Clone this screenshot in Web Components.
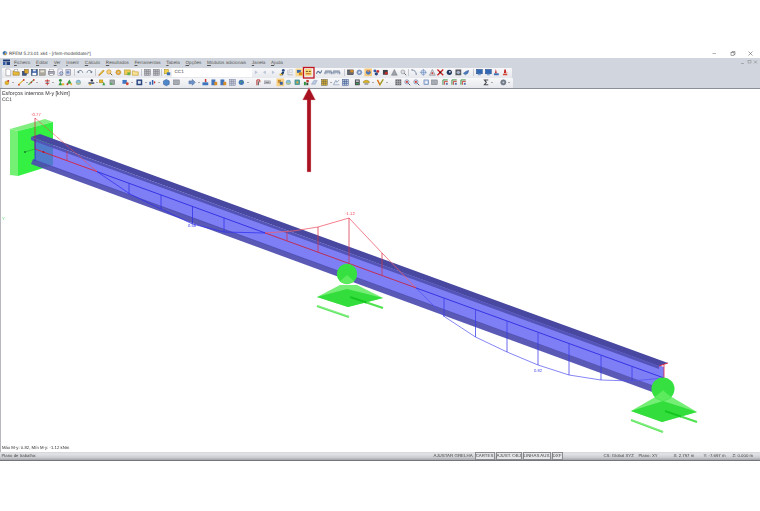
<!DOCTYPE html>
<html lang="pt">
<head>
<meta charset="utf-8">
<title>RFEM</title>
<style>
  html, body { margin: 0; background: #fff; }
</style>
</head>
<body>
<rfem-app>
  <rfem-titlebar>RFEM 5.23.01 x64 - [rfem-modelldatei*]</rfem-titlebar>
  <rfem-menubar>
    <rfem-menu><u>F</u>icheiro</rfem-menu>
    <rfem-menu><u>E</u>ditar</rfem-menu>
    <rfem-menu><u>V</u>er</rfem-menu>
    <rfem-menu><u>I</u>nserir</rfem-menu>
    <rfem-menu><u>C</u>álculo</rfem-menu>
    <rfem-menu><u>R</u>esultados</rfem-menu>
    <rfem-menu><u>F</u>erramentas</rfem-menu>
    <rfem-menu><u>T</u>abela</rfem-menu>
    <rfem-menu><u>O</u>pções</rfem-menu>
    <rfem-menu><u>M</u>ódulos adicionais</rfem-menu>
    <rfem-menu><u>J</u>anela</rfem-menu>
    <rfem-menu><u>A</u>juda</rfem-menu>
  </rfem-menubar>
  <rfem-toolbar width="510" pad="1.65" items="doc open blue save grey print prev prev2 | undo redo | pencil find ring note folder | table table | note2 combo fwd0 back0 fwd0 person faint sel1 boxed +2.3 squig bridge bridge +2.5 | box gear sel2 dots dark pyr lens | curve cross tri xred dblue dgray bshape +1 | screen screen rblue flag"></rfem-toolbar>
  <rfem-toolbar width="511" pad=".7" items="y1 v +1.65 dash v +-2.3 cdash v +3.7 rcross v +1.7 g1 +-.7 g2 +.3 lb +4.3 pers v +-.3 yg +1.3 gg +4.3 br v +1.7 dsq v +.7 graph v +1.7 cube +1.3 gray +7.3 barrow v +.7 rb +.3 bo +.3 bo +.3 gridg +.3 glob v +4.7 rbr +.3 gtext +4.3 sel3 +-.7 lb +.3 teal +.3 gr +-.7 lb2 +1.3 yg2 v +-.3 bg +.3 gridb +3.3 dy +.3 yg3 v +1.7 rain v +5.7 dgrid +.3 mag +.3 mag +1.3 blue2 +-.7 gray +2.3 fr +.3 fr +.3 fr +14.3 sig v +4.7 cog v"></rfem-toolbar>
  <rfem-viewport></rfem-viewport>
  <rfem-statusbar>
    <span slot="left">Plano de trabalho:</span>
    <rfem-toggle slot="toggles" w="20">AJUSTAR</rfem-toggle>
    <rfem-toggle slot="toggles" w="20">GRELHA</rfem-toggle>
    <rfem-toggle slot="toggles" w="20" on>CARTES</rfem-toggle>
    <rfem-toggle slot="toggles" w="26" on>AJUST. OBJ</rfem-toggle>
    <rfem-toggle slot="toggles" w="28" on>LINHAS AUX.</rfem-toggle>
    <rfem-toggle slot="toggles" w="11" on>DXF</rfem-toggle>
    <rfem-readout slot="right" w="35">CS: Global XYZ</rfem-readout>
    <rfem-readout slot="right" w="35">Plano: XY</rfem-readout>
    <rfem-readout slot="right" w="30">X: 2.797 m</rfem-readout>
    <rfem-readout slot="right" w="29">Y: -7.697 m</rfem-readout>
    <rfem-readout slot="right">Z: 0.000 m</rfem-readout>
  </rfem-statusbar>
  <rfem-callout></rfem-callout>
</rfem-app>

<script>
const r = (x, y, w, h, f, s) => `<rect x="${x}" y="${y}" width="${w}" height="${h}" fill="${f}"${s ? ` stroke="${s}"` : ''}/>`;
const c = (x, y, rad, f, s) => `<circle cx="${x}" cy="${y}" r="${rad}" fill="${f}"${s ? ` stroke="${s}"` : ''}/>`;
const p = (d, f, s, w) => `<path d="${d}" fill="${f || 'none'}"${s ? ` stroke="${s}" stroke-width="${w || 1.5}"` : ''}/>`;

// toolbar glyphs, 16x16
const ICONS = {
  doc: p('M3 1h7l3 3v11H3z', '#fff', '#777', 1),
  open: p('M1 5h5l1 2h7v7H1z', '#e8b93a', '#8a6a1a', 1) + r(4, 2, 7, 4, '#fff', '#999'),
  blue: r(2, 6, 8, 8, '#33558f', '#223') + r(6, 2, 8, 8, '#d9a52c', '#654'),
  save: r(2, 2, 12, 12, '#3b62a8', '#234') + r(5, 2, 6, 4, '#dfe6f2') + r(4, 9, 8, 5, '#fff'),
  grey: r(2, 2, 12, 12, '#a9a59a', '#777') + r(4, 4, 8, 4, '#e5e2d8'),
  print: r(4, 2, 8, 4, '#fff', '#888') + r(2, 6, 12, 6, '#aab', '#667') + r(4, 11, 8, 3, '#fff', '#888'),
  prev: r(3, 1, 9, 13, '#eef', '#889') + c(10, 10, 3.5, '#bcd', '#447'),
  prev2: r(3, 2, 10, 12, '#ccd', '#778') + c(7, 8, 3, '#6f8fc8'),
  undo: p('M3 8a5 5 0 0 1 9-2l1 3', 'none', '#7d8a9c', 2) + p('M1 6l3 4 3-3z', '#5a6b85'),
  redo: p('M13 8a5 5 0 0 0-9-2l-1 3', 'none', '#7d8a9c', 2) + p('M15 6l-3 4-3-3z', '#5a6b85'),
  pencil: p('M3 13L12 3l2 2L5 14z', '#e9c020', '#a5761a', 1) + p('M2 15l1-3 2 2z', '#c62828'),
  find: c(7, 7, 4.5, '#f4d27a', '#c47a10') + p('M10 10l4 4', 'none', '#7a5a20', 2),
  ring: c(8, 8, 5, '#e9a92e', '#a86f10') + c(8, 8, 2, '#c9ccd2'),
  note: r(2, 3, 12, 10, '#eecb55', '#a98a20') + r(8, 8, 6, 6, '#6ab04a'),
  note2: r(2, 2, 8, 9, '#f2d24e', '#a68818') + r(7, 8, 7, 6, '#3e6fb5'),
  folder: p('M2 5h4l1 2h7v7H2z', '#f7e39c', '#c8941a', 1.2),
  table: r(2, 2, 12, 12, '#c0c2c8', '#6e7078') + p('M2 6h12M2 10h12M6 2v12M10 2v12', 'none', '#74767c', 1),
  fwd0: p('M5 4l6 4-6 4z', '#b9c4d6'),
  back0: p('M11 4L5 8l6 4z', '#b9c4d6'),
  person: c(10, 4, 3, '#2c4f86') + p('M3 14L8 6l4 2-3 6z', '#1f3a68') + r(2, 11, 6, 3, '#e6b425'),
  faint: p('M3 3v10h10', 'none', '#b6bac2', 2) + r(6, 2, 7, 7, '#e8eaee', '#c2c5cc'),
  sel1: r(0, 0, 16, 16, '#f9d98f') + r(3, 3, 8, 6, '#3d68a8') + r(7, 8, 7, 6, '#d98e1d'),
  boxed: r(1, 1, 14, 14, '#fbd97d') + r(3, 5, 4, 2, '#5b4420') + r(9, 5, 4, 2, '#5b4420') + r(3, 10, 10, 2, '#c0561b'),
  squig: p('M2 11c2-6 4-6 6-3s3 1 5-4', 'none', '#5b7195', 2.2),
  bridge: p('M1 12V7h14v5', 'none', '#55678a', 1.6) + p('M1 9h14M5 7v5M11 7v5', 'none', '#7c8ba8', 1) + r(1, 4, 14, 2, '#8e99ad'),
  box: r(2, 3, 12, 10, '#676a70', '#333') + r(8, 3, 6, 5, '#d8892a'),
  gear: c(8, 8, 5, '#8fa8d0', '#3e5e92') + c(8, 8, 2, '#e8ecf4'),
  sel2: r(0, 0, 16, 16, '#f7c978') + c(8, 8, 5, '#4f76b5') + r(6, 3, 4, 4, '#d84'),
  dots: c(5, 5, 3, '#2f5da3') + c(11, 6, 3, '#c43030') + c(8, 11, 3.4, '#28457d'),
  dark: r(3, 3, 10, 10, '#3f4148') + c(10, 10, 3, '#c22e2e'),
  pyr: p('M8 2l6 12H2z', '#9ea1a8', '#74767d', 1),
  lens: c(7, 7, 4, '#dcdfe5', '#72757c') + p('M10 10l4 4', 'none', '#666', 2),
  curve: p('M3 3c6 0 8 4 9 9', 'none', '#7a8aa5', 2) + c(3, 3, 1.6, '#99a') + c(12, 12, 1.6, '#99a'),
  cross: c(8, 8, 5, '#d7e2f2', '#5d80b8') + p('M8 1v14M1 8h14', 'none', '#4d70aa', 1),
  tri: p('M8 2l6 12H2z', '#d9dbe0', '#7b7e85', 1.2) + c(8, 10, 2, '#cc3a3a'),
  xred: p('M2 2l12 12M14 2L2 14', 'none', '#c81e1e', 2.6) + c(8, 8, 2, '#222'),
  dblue: c(8, 8, 5.5, '#22385f') + c(9, 7, 2, '#dbe3f0'),
  dgray: r(2, 2, 12, 12, '#5a5d63') + c(8, 8, 3.5, '#a9b7cc'),
  bshape: p('M2 10l5-4 6-2-2 6-5 3z', '#4a7cc0', '#28508c', 1),
  screen: r(2, 2, 12, 9, '#2f68b5', '#1c3f7a') + r(5, 11, 6, 3, '#7fa1d1'),
  rblue: p('M7 1l2 9H5z', '#c22b2b') + r(3, 10, 10, 4, '#3f6eb4'),
  flag: p('M6 2h3l1 8H5z', '#c21f1f') + p('M9 6l5 3-5 2z', '#f0b8a8') + r(3, 11, 9, 3, '#d34a3a'),
  y1: c(7, 9, 4, '#e3b62c', '#a98512') + c(10, 5, 2, '#c5362c'),
  dash: p('M2 13L13 3', 'none', '#dcb132', 2.2) + c(3, 13, 1.8, '#c5362c') + c(13, 3, 1.8, '#c5362c'),
  cdash: p('M2 13L13 3', 'none', '#6aa85a', 2.2) + c(8, 8, 1.8, '#c5362c') + c(13, 3, 1.8, '#c5362c'),
  rcross: p('M8 2v12M3 5h10M4 10h8', 'none', '#c8332d', 2) + c(8, 8, 2, '#69a'),
  g1: c(6, 4, 3, '#2f8f3a') + p('M2 14l4-8 4 8z', '#2f9a3e') + r(9, 10, 5, 4, '#e3b62c'),
  g2: p('M8 2l5 9H3z', '#3a9c46') + c(4, 12, 2, '#c5362c') + c(12, 12, 2, '#e3b62c'),
  lb: c(8, 8, 4.6, '#8cc2d8', '#5f91a8') + r(3, 9, 10, 3, '#b3c08d'),
  pers: c(9, 4, 2.5, '#222a3a') + r(2, 8, 12, 3, '#3b4866') + r(3, 11, 5, 3, '#e3b62c'),
  yg: r(2, 3, 7, 6, '#e3b62c', '#a98512') + p('M8 14l3-7 3 7z', '#3a9c46'),
  gg: r(3, 3, 10, 10, '#9da6a4', '#6e7a76') + r(3, 9, 5, 4, '#58a765'),
  br: r(2, 3, 9, 8, '#3e77bf') + c(12, 11, 3, '#d2452f'),
  dsq: r(2, 2, 12, 12, '#29457e') + r(5, 5, 6, 6, '#d7e0f0'),
  graph: p('M2 13V7h3v6zM7 13V3h3v10z', '#2d62ad') + r(11, 6, 3, 4, '#c8372d'),
  cube: p('M8 2l6 3v7l-6 3-6-3V5z', '#4f88c8', '#244e8c', 1),
  gray: r(2, 3, 12, 10, '#a7abb3', '#74777f'),
  barrow: p('M1 5h7V2l6 6-6 6v-3H1z', '#6f92c6', '#3a5c96', 1),
  rb: r(7, 1, 3, 7, '#c9362e') + r(2, 8, 12, 6, '#3e76be'),
  bo: r(2, 2, 8, 12, '#4174bc') + r(8, 7, 6, 7, '#d98e2a'),
  gridg: r(2, 2, 12, 12, '#d2d4d9', '#6f7aa0') + p('M2 6h12M2 10h12M6 2v12M10 2v12', 'none', '#6f7aa0', 1),
  glob: c(8, 8, 5.5, '#3f74b8') + p('M5 5l3 2-2 4zM10 4l3 3-3 1z', '#58a262'),
  rbr: p('M11 3H5v11M11 3v5', 'none', '#b92e2a', 2) + p('M8 6v8', 'none', '#222', 1.6),
  gtext: r(2, 5, 12, 6, '#c9ccd2', '#8a8d94') + r(4, 7, 8, 2, '#7a7d84'),
  sel3: r(0, 0, 16, 16, '#f7cf82') + r(3, 3, 6, 6, '#c78a2a') + r(7, 7, 6, 6, '#3a5e9a'),
  teal: r(3, 3, 10, 10, '#53a4a4', '#2f7a7a') + r(6, 6, 4, 4, '#e3a93a'),
  gr: r(3, 7, 4, 7, '#2f8f3a') + r(8, 3, 5, 5, '#c2342c') + r(8, 9, 4, 5, '#2b4e38'),
  lb2: p('M2 12l5-8h7l-4 8z', '#b9c7df', '#8899b8', 1),
  yg2: r(2, 2, 12, 12, '#dbb53d', '#5e5a40') + p('M2 6h12M2 10h12M6 2v12M10 2v12', 'none', '#5e5a40', 1),
  bg: p('M2 13l5-9 2 4 5-5', 'none', '#7e93b5', 1.6) + r(2, 12, 12, 2, '#a8b5cb'),
  gridb: r(2, 2, 12, 12, '#c8d2e4', '#2f4e88') + p('M2 6h12M2 10h12M6 2v12M10 2v12', 'none', '#2f4e88', 1.2),
  dy: r(3, 2, 10, 12, '#4b4e55') + r(5, 4, 6, 3, '#c8cbd2') + r(5, 9, 6, 3, '#3f9a50'),
  yg3: p('M2 6c4-3 8-3 12 0v3H2z', '#dcb327', '#8a7722', 1) + r(4, 10, 8, 3, '#8e9198'),
  rain: p('M2 3l5 10 7-11', 'none', '#e3a81f', 3) + p('M2 3l5 10', 'none', '#d23a2a', 1.4) + p('M7 13l7-11', 'none', '#3d9a49', 1.4),
  dgrid: r(2, 2, 12, 12, '#5e6167') + p('M2 6h12M2 10h12M6 2v12M10 2v12', 'none', '#d0d2d6', 1),
  mag: c(7, 7, 4.4, '#dfe6f2', '#4c6290') + r(5, 5, 4, 4, '#c9423a') + p('M10 10l4 4', 'none', '#4c5670', 2),
  blue2: r(3, 3, 10, 10, '#b9c9e4', '#4a6ea8') + r(6, 6, 4, 4, '#fff'),
  fr: p('M3 13V3h10', 'none', '#3e9448', 2) + p('M6 13V6h7', 'none', '#c8423a', 2) + r(9, 9, 4, 4, '#5874a8'),
  sig: p('M12 3H4l4 5-4 5h8', 'none', '#45484e', 2.2),
  cog: c(8, 8, 5.4, '#76808f', '#555c68') + c(8, 8, 2, '#c7cbd3')
};

const SHEET_HOST = 'font-family: "Liberation Sans", Arial, sans-serif;';

class RfemApp extends HTMLElement {
  connectedCallback() {
    this.attachShadow({ mode: 'open' }).innerHTML = `
      <style>
        :host { display: block; position: relative; width: 760px; height: 511px; overflow: hidden;
          ${SHEET_HOST} font-size: 4.4px; color: #333; text-rendering: geometricPrecision; filter: blur(.3px); }
        .chrome { background: #d1d5dd; border-bottom: 1.5px solid #8c8f97; height: 29.5px; }
        .top { padding-top: 48px; }
      </style>
      <div class="top"><slot name="title"></slot></div>
      <div class="chrome"><slot name="chrome"></slot></div>
      <slot></slot>`;
    const bars = [...this.children];
    bars.forEach(el => {
      const tag = el.tagName.toLowerCase();
      if (tag === 'rfem-titlebar') el.slot = 'title';
      if (tag === 'rfem-menubar' || tag === 'rfem-toolbar') el.slot = 'chrome';
    });
  }
}

class RfemTitlebar extends HTMLElement {
  connectedCallback() {
    this.attachShadow({ mode: 'open' }).innerHTML = `
      <style>
        :host { display: flex; align-items: center; height: 10px; padding: 0 6px 0 2px; background: #fff; color: #444; font-size: 4.65px; }
        svg { width: 6px; height: 6px; margin-right: 1px; flex: none; }
        .txt { flex: 1; }
        .win { display: flex; gap: 9.5px; color: #555; }
        .win svg { width: 8.5px; height: 7px; margin: 0; }
      </style>
      <svg viewBox="0 0 16 16">${p('M2 5l6-3v12l-6-3z', '#3f6fa8')}${p('M8 2l6 3v6l-6 3z', '#7ea0c9')}${r(7, 9, 4, 5, '#d9a52c')}</svg>
      <span class="txt"><slot></slot></span>
      <span class="win">
        <svg viewBox="0 0 17 14">${p('M5 7h7', 'none', '#666', 1)}</svg>
        <svg viewBox="0 0 17 14">${r(6, 5, 6, 6, 'none', '#555')}${p('M8 5V3h6v6h-2', 'none', '#555', 1)}</svg>
        <svg viewBox="0 0 17 14">${p('M5 3l8 8M13 3l-8 8', 'none', '#444', 1)}</svg>
      </span>`;
  }
}

class RfemMenubar extends HTMLElement {
  connectedCallback() {
    this.attachShadow({ mode: 'open' }).innerHTML = `
      <style>
        :host { display: flex; align-items: center; height: 9.5px; padding-left: 1.5px; color: #555; font-size: 4.6px; }
        .logo { width: 9px; height: 7px; margin-right: 3.5px; flex: none; }
        .items { display: flex; gap: 5.7px; flex: 1; }
        .mdi { display: flex; gap: 1.5px; padding-right: 2px; }
        .mdi svg { width: 5px; height: 5px; }
      </style>
      <svg class="logo" viewBox="0 0 18 14">${r(2, 1, 14, 4, '#1f3c78')}${r(2, 6, 5, 6, '#2e5aa8')}${r(9, 6, 7, 6, '#233f7a')}</svg>
      <div class="items"><slot></slot></div>
      <div class="mdi">
        <svg viewBox="0 0 10 10">${p('M2 7h6', 'none', '#888', 1.2)}</svg>
        <svg viewBox="0 0 10 10">${r(2, 1, 6, 5, 'none', '#888')}</svg>
        <svg viewBox="0 0 10 10">${p('M2 1l6 6M8 1L2 7', 'none', '#888', 1.2)}</svg>
      </div>`;
  }
}

class RfemMenu extends HTMLElement {
  connectedCallback() {
    this.attachShadow({ mode: 'open' }).innerHTML = `
      <style>:host { display: block; white-space: nowrap; }</style><slot></slot>`;
  }
}

class RfemToolbar extends HTMLElement {
  connectedCallback() {
    const width = this.getAttribute('width');
    const pad = this.getAttribute('pad');
    const cells = this.getAttribute('items').split(' ').map(t => {
      if (t === '|') return '<i class="sep"></i>';
      if (t === 'v') return '<i class="drop"></i>';
      if (t[0] === '+') return `<i style="margin-left:${t.slice(1)}px"></i>`;
      if (t === 'combo') return '<span class="combo">CC1</span>';
      return `<rfem-icon name="${t}"></rfem-icon>`;
    }).join('');
    this.attachShadow({ mode: 'open' }).innerHTML = `
      <style>
        :host { display: flex; align-items: center; box-sizing: border-box; width: ${width}px; height: 10px; margin: 0 0 0 2px; padding-left: ${pad}px;
          background: linear-gradient(#f8f8fa, #e6e8ed); border-radius: 1px; }
        i { display: block; flex: none; }
        .sep { width: 1px; height: 7.5px; margin: 0 1px; background: #c4c7ce; }
        .drop { width: 3.6px; height: 2px; position: relative; }
        .drop::after { content: ""; position: absolute; left: .8px; top: 0; border: 1px solid transparent; border-top: 1.6px solid #666; border-bottom: 0; }
        .combo { flex: none; box-sizing: border-box; width: 80px; height: 8.5px; line-height: 8.5px; padding-left: 2.5px; margin-right: -.3px; background: #fff; color: #444; font-size: 4.6px; }
      </style>${cells}`;
  }
}

class RfemIcon extends HTMLElement {
  connectedCallback() {
    const art = ICONS[this.getAttribute('name')] || '';
    this.attachShadow({ mode: 'open' }).innerHTML = `
      <style>
        :host { display: block; flex: none; width: 8.7px; height: 8.7px; }
        svg { display: block; width: 8.7px; height: 8.7px; }
      </style>
      <svg viewBox="-1 -1 18 18">${art}</svg>`;
  }
}

class RfemViewport extends HTMLElement {
  connectedCallback() {
    const axisY = x => 149 + (x - 35) * 0.3646;
    const post = (x, y2, col, w = .75) => `<line x1="${x}" y1="${axisY(x)}" x2="${x}" y2="${y2}" stroke="${col}" stroke-width="${w}"/>`;
    const support = (s, rad, o) => `
      <polygon points="${o.L} ${o.T} ${o.R} ${o.B}" fill="#74ee74"/>
      <polygon points="${o.L} ${o.Ti} ${o.R} ${o.B}" fill="#33dd3c"/>
      <line x1="${o.b1[0]}" y1="${o.b1[1]}" x2="${o.b1[2]}" y2="${o.b1[3]}" stroke="#5ee65e" stroke-width="2.2"/>
      <line x1="${o.b1[0]}" y1="${o.b1[1] - .5}" x2="${o.b1[2]}" y2="${o.b1[3] - .5}" stroke="#a4f4a4" stroke-width=".6"/>
      <line x1="${o.b2[0]}" y1="${o.b2[1]}" x2="${o.b2[2]}" y2="${o.b2[3]}" stroke="#4fe24f" stroke-width="2.2"/>
      <line x1="${o.b2[0]}" y1="${o.b2[1]}" x2="${(o.b2[0] + o.b2[2]) / 2}" y2="${(o.b2[1] + o.b2[3]) / 2}" stroke="#12c81e" stroke-width="2"/>
      <circle cx="${s[0]}" cy="${s[1]}" r="${rad}" fill="#35e040"/>
      <path d="M${s[0] - rad * .7} ${s[1] + rad * .7} L${s[0]} ${s[1] + rad * .1} L${s[0] + rad * .7} ${s[1] + rad * .7} A${rad} ${rad} 0 0 1 ${s[0] - rad * .7} ${s[1] + rad * .7}z" fill="#5ceb5c"/>`;

    const bluePosts1 = [[129, 194], [161, 209], [192.5, 224], [224, 232]];
    const redPosts = [[287, 232], [318, 227], [349, 218], [382, 253]];
    const bluePosts2 = [[444, 317], [475.5, 337], [507, 352], [538, 365], [569, 375], [601, 380], [632, 381]];

    this.attachShadow({ mode: 'open' }).innerHTML = `
      <style>
        :host { display: block; position: relative; height: 363px; background: #fff; border-left: 1px solid #b9b9bd; }
        svg { display: block; width: 759px; height: 363px; }
        text { font-family: "Liberation Sans", Arial, sans-serif; }
      </style>
      <svg viewBox="1 89 759 363">
        <text x="2" y="95" font-size="5.4" fill="#333">Esforços internos M-y [kNm]</text>
        <text x="2" y="101" font-size="5" fill="#333">CC1</text>
        <text x="2" y="219.5" font-size="4.4" fill="#55dd77">Y</text>
        <text x="2" y="449" font-size="4.3" fill="#333">Máx M-y: 0.82, Mín M-y: -1.12 kNm</text>

        <!-- fixed end -->
        <polygon points="10,129 45,119 53,122 18,131" fill="#82ee82"/>
        <polygon points="10,129 18,131 18,176 10,175" fill="#74f074"/>
        <polygon points="18,131 53,122 53,165 18,176" fill="#33f043"/>

        <!-- beam -->
        <polygon points="35,139 664,367 664,390 35,161" fill="#5a5af2" fill-opacity=".78"/>
        <polygon points="33,159 660,388 655,393 31,164" fill="#4c4cb0" fill-opacity=".92"/>
        <polygon points="40,134 668,363 659,366 31,137" fill="#4848a0"/>
        <polygon points="31,137 659,366 659,369 31,140" fill="#5252b4" fill-opacity=".95"/>

        <!-- moment diagram -->
        <g fill="none" stroke-linejoin="round">
          <polyline points="35,118 97,171.6" stroke="#f04a55" stroke-width=".8" stroke-dasharray="1.2 .5"/>
          <line x1="35" y1="118" x2="35" y2="149" stroke="#d8203a" stroke-width=".7"/>
          <line x1="35" y1="149" x2="97" y2="171.6" stroke="#d8203a" stroke-width=".9"/>
          <line x1="67" y1="151" x2="67" y2="160.6" stroke="#d8304a" stroke-width=".7"/>
          <line x1="35" y1="139" x2="35" y2="161" stroke="#1a1ad0" stroke-width=".7"/>
          <polyline points="97,171.6 130,194 161,209 192.5,224 224,232 265,233" stroke="#2f2ff0" stroke-width=".75"/>
          <line x1="97" y1="171.6" x2="265" y2="232.9" stroke="#2828e0" stroke-width=".85"/>
          ${bluePosts1.map(([x, y]) => post(x, y, '#3030e8')).join('')}
          <polyline points="265,233 293,231 318,227 349,218 382,253 416,287.9" stroke="#f0606e" stroke-width=".8"/>
          <line x1="265" y1="232.9" x2="416" y2="287.9" stroke="#c8203a" stroke-width=".85"/>
          ${redPosts.map(([x, y]) => post(x, y, '#d8304a')).join('')}
          <polyline points="416,288 445,317 475.5,337 507,352 538,365 569,375 601,380 632,381 664,378" stroke="#5050f0" stroke-width=".7"/>
          <line x1="416" y1="287.9" x2="664" y2="378" stroke="#2828e0" stroke-width=".85"/>
          ${bluePosts2.map(([x, y]) => post(x, y, '#3a3aea')).join('')}
          <line x1="664" y1="365" x2="664" y2="378" stroke="#e0203a" stroke-width=".8"/>
          <line x1="659" y1="366" x2="668" y2="363" stroke="#e0203a" stroke-width=".9"/>
          <line x1="25" y1="152" x2="35" y2="149" stroke="#1f8f2a" stroke-width=".5"/>
        </g>
        <circle cx="43.5" cy="152" r=".9" fill="#b0102a"/>
        <circle cx="25" cy="152" r=".9" fill="#147a20"/>
        <text x="36" y="115.5" font-size="4.2" fill="#f04050" text-anchor="middle">-0.77</text>
        <text x="350" y="214.8" font-size="4.2" fill="#f04050" text-anchor="middle">-1.12</text>
        <text x="192" y="227.2" font-size="4.2" fill="#3a3af0" text-anchor="middle">0.58</text>
        <text x="538" y="371.5" font-size="4.2" fill="#5050ee" text-anchor="middle">0.82</text>

        <!-- rollers -->
        ${support([347, 274], 10.2, { L: '317,297', T: '340,285 357,285', Ti: '347,289', R: '383,298', B: '348,307', b1: [317, 306, 349, 317], b2: [350, 297, 383, 308] })}
        ${support([663, 389], 11.5, { L: '631,411', T: '657,396 670,396', Ti: '663,401', R: '697,412', B: '662,422', b1: [631, 420, 663, 432], b2: [665, 411, 697, 422] })}
      </svg>`;
  }
}

class RfemStatusbar extends HTMLElement {
  connectedCallback() {
    this.attachShadow({ mode: 'open' }).innerHTML = `
      <style>
        :host { display: flex; align-items: center; box-sizing: border-box; height: 9.5px; padding: 0 0 0 1.5px; color: #444; white-space: nowrap; font-size: 4.3px;
          background: linear-gradient(#d4d6da 0, #e2e3e6 25%, #c9cbcf 70%, #a1a3a8 100%); border-bottom: 1px solid #74767b; }
        .left { width: 431px; flex: none; }
        .toggles { display: flex; gap: 1px; width: 171px; flex: none; }
        .right { display: flex; }
      </style>
      <div class="left"><slot name="left"></slot></div>
      <div class="toggles"><slot name="toggles"></slot></div>
      <div class="right"><slot name="right"></slot></div>`;
  }
}

class RfemToggle extends HTMLElement {
  connectedCallback() {
    this.attachShadow({ mode: 'open' }).innerHTML = `
      <style>
        :host { display: block; box-sizing: border-box; width: ${this.getAttribute('w')}px; height: 7.5px; line-height: 6.5px; font-size: 4.4px; text-align: center;
          border: .5px solid transparent; }
        :host([on]) { border-color: #8a8c90; background: #e4e5e8; }
      </style><slot></slot>`;
  }
}

class RfemReadout extends HTMLElement {
  connectedCallback() {
    const w = this.getAttribute('w');
    this.attachShadow({ mode: 'open' }).innerHTML = `
      <style>:host { display: block; font-size: 4.3px; ${w ? `width: ${w}px;` : ''} }</style><slot></slot>`;
  }
}

class RfemCallout extends HTMLElement {
  connectedCallback() {
    this.attachShadow({ mode: 'open' }).innerHTML = `
      <style>
        :host { position: absolute; left: 300px; top: 65px; width: 18px; height: 110px; display: block; }
        svg { display: block; width: 18px; height: 110px; }
      </style>
      <svg viewBox="300 65 18 110">
        <rect x="303.5" y="67.5" width="10.5" height="10.5" fill="none" stroke="#c01420" stroke-width="1.3"/>
        <path d="M309 87.5L315.5 100H311V172H307V100H302.5z" fill="#a81220" stroke="#e8b8bc" stroke-width=".4"/>
      </svg>`;
  }
}

customElements.define('rfem-app', RfemApp);
customElements.define('rfem-titlebar', RfemTitlebar);
customElements.define('rfem-menubar', RfemMenubar);
customElements.define('rfem-menu', RfemMenu);
customElements.define('rfem-toolbar', RfemToolbar);
customElements.define('rfem-icon', RfemIcon);
customElements.define('rfem-viewport', RfemViewport);
customElements.define('rfem-statusbar', RfemStatusbar);
customElements.define('rfem-toggle', RfemToggle);
customElements.define('rfem-readout', RfemReadout);
customElements.define('rfem-callout', RfemCallout);
</script>
</body>
</html>
